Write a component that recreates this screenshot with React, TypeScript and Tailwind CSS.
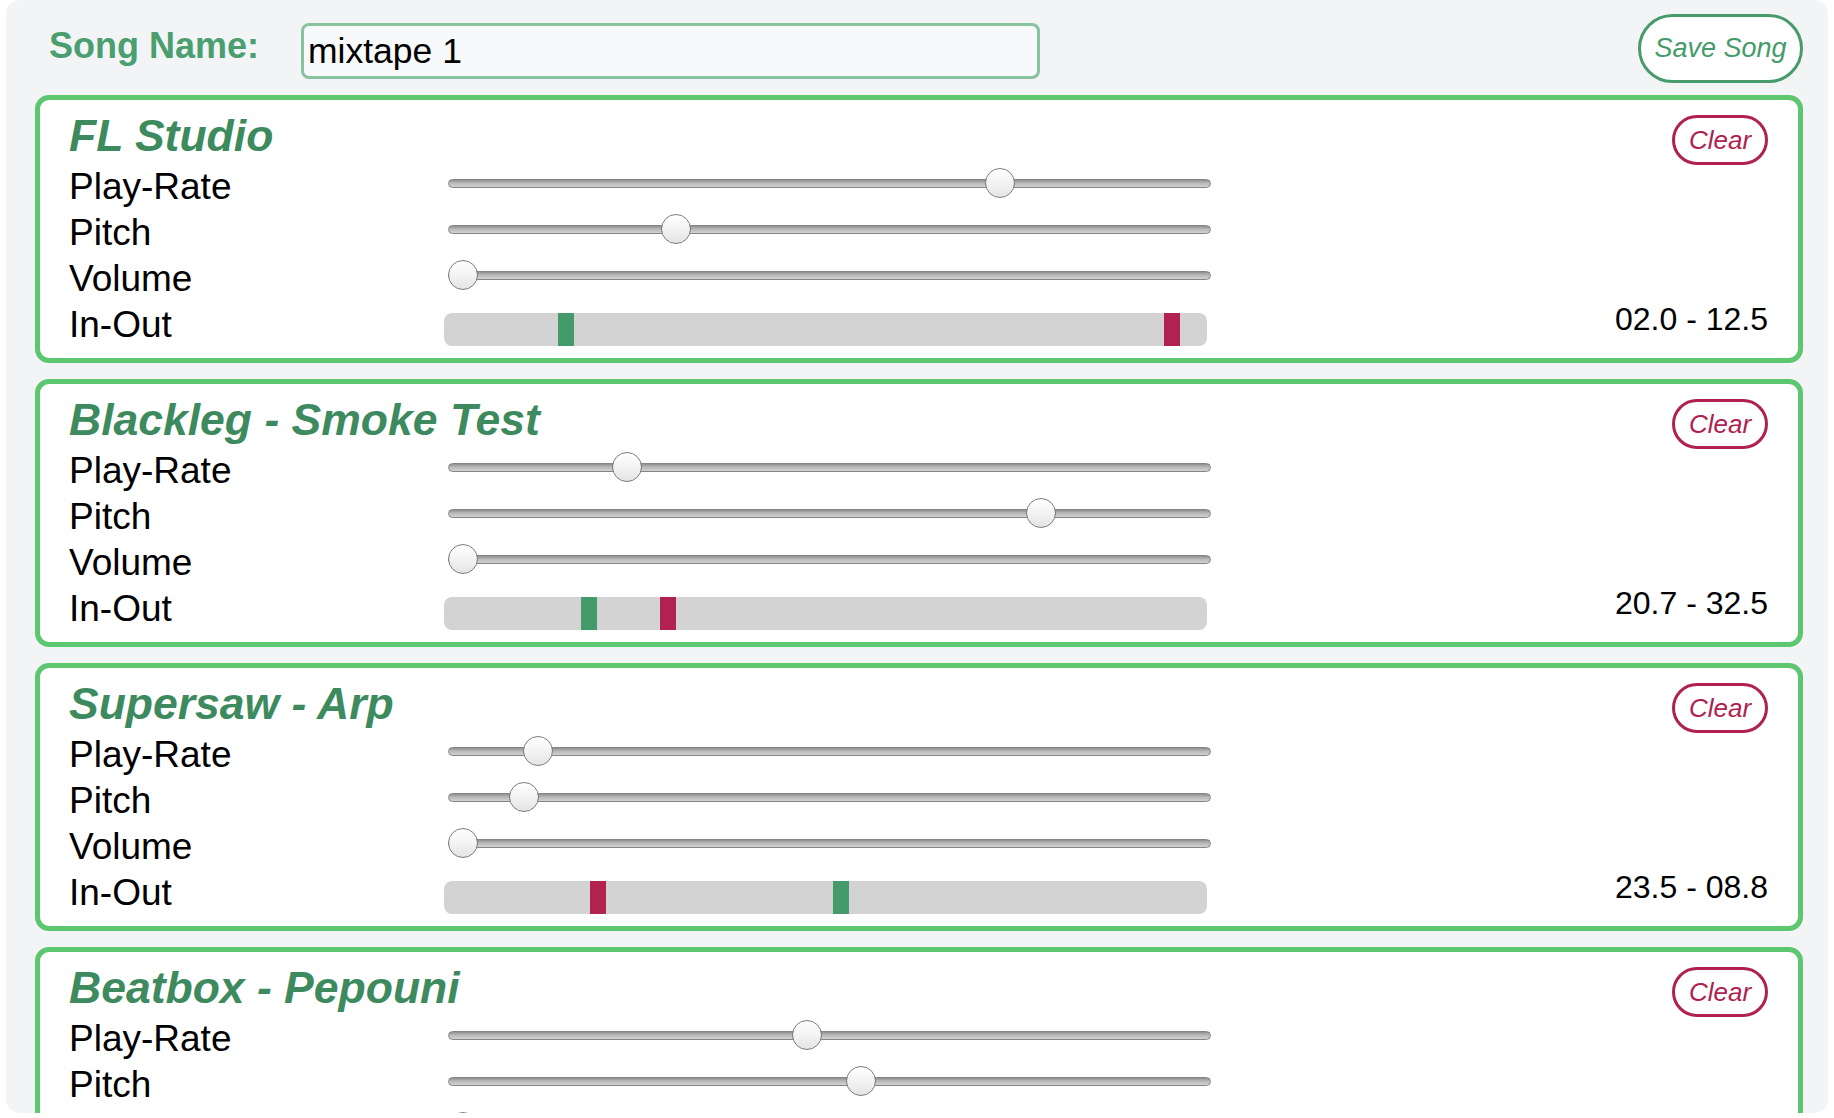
import React from "react";

interface Track {
  title: string;
  rate: number;
  pitch: number;
  volume: number;
  inPos: number;
  outPos: number;
  range: string;
}

const tracks: Track[] = [
  { title: "FL Studio", rate: 0.732, pitch: 0.291, volume: 0, inPos: 0.149, outPos: 0.944, range: "02.0 - 12.5" },
  { title: "Blackleg - Smoke Test", rate: 0.224, pitch: 0.789, volume: 0, inPos: 0.18, outPos: 0.283, range: "20.7 - 32.5" },
  { title: "Supersaw - Arp", rate: 0.102, pitch: 0.083, volume: 0, inPos: 0.51, outPos: 0.191, range: "23.5 - 08.8" },
  { title: "Beatbox - Pepouni", rate: 0.469, pitch: 0.543, volume: 0, inPos: 0.2, outPos: 0.6, range: "00.0 - 00.0" },
];

const Slider = ({ value }: { value: number }) => (
  <div className="relative ml-[4px] flex h-[46px] w-[763px] items-center pb-[4px]">
    <div className="h-[9px] w-full rounded-full border border-[#858585] bg-[linear-gradient(to_bottom,#8f8f8f,#b9b9b9_45%,#d2d2d2)]" />
    <div
      className="absolute top-[6px] h-[30px] w-[30px] rounded-full border-[1.5px] border-[#7c7c7c] bg-[linear-gradient(to_bottom,#ffffff,#f3f3f3_50%,#e4e4e4)]"
      style={{ left: value * (763 - 30) + "px" }}
    />
  </div>
);

const InOut = ({ inPos, outPos }: { inPos: number; outPos: number }) => (
  <div className="flex h-[46px] items-start pt-[13px]">
    <div className="relative h-[33px] w-[763px] overflow-hidden rounded-[8px] bg-[#d3d3d3]">
      <div className="absolute top-0 h-full w-[16px] bg-[#449a6a]" style={{ left: inPos * 763 + "px" }} />
      <div className="absolute top-0 h-full w-[16px] bg-[#b22250]" style={{ left: outPos * 763 + "px" }} />
    </div>
  </div>
);

const Row = ({ label, children }: { label: string; children: React.ReactNode }) => (
  <div className="grid grid-cols-[375px_767px]">
    <div className="h-[46px] text-[37px] leading-[50px] text-black">{label}</div>
    {children}
  </div>
);

const TrackCard = ({ track }: { track: Track }) => (
  <div className="flex shrink-0 rounded-[14px] border-[5px] border-[#5cc76f] bg-white pb-[12px] pl-[29px] pr-[30px] pt-[9px]">
    <div className="flex-1">
      <h2 className="h-[53px] text-[44.5px] font-bold italic leading-[53px] text-[#3d8a5e]">{track.title}</h2>
      <Row label="Play-Rate">
        <Slider value={track.rate} />
      </Row>
      <Row label="Pitch">
        <Slider value={track.pitch} />
      </Row>
      <Row label="Volume">
        <Slider value={track.volume} />
      </Row>
      <Row label="In-Out">
        <InOut inPos={track.inPos} outPos={track.outPos} />
      </Row>
    </div>
    <div className="flex flex-col items-end justify-between">
      <button className="mt-[6px] h-[50px] w-[96px] rounded-full border-[3px] border-[#b0214f] bg-white text-[26px] italic text-[#b0214f]">
        Clear
      </button>
      <div className="mb-[7px] text-[32px] leading-[40px] text-black">{track.range}</div>
    </div>
  </div>
);

export default function App() {
  return (
    <div className="min-h-screen bg-white font-['Liberation_Sans',Arial,sans-serif]">
      <div className="ml-[6px] flex h-[1113px] w-[1822px] flex-col overflow-hidden rounded-[14px] bg-[#f3f4f6] pl-[29px] pr-[25px] pt-[14px]">
        <div className="mb-[12px] flex h-[69px] shrink-0 items-start">
          <label className="ml-[14px] mt-[12px] w-[252px] text-[36px] font-bold leading-[40px] text-[#4a9e6f]">
            Song Name:
          </label>
          <input
            className="mt-[9px] h-[56px] w-[739px] rounded-[8px] border-[3px] border-[#88c29f] bg-[#f8f9fa] px-[4px] text-[35.5px] text-black outline-none"
            defaultValue="mixtape 1"
          />
          <button className="ml-auto h-[69px] w-[165px] rounded-full border-[3px] border-[#479b6b] bg-white text-[27px] italic text-[#479b6b]">
            Save Song
          </button>
        </div>
        <div className="flex flex-col gap-[16px]">
          {tracks.map((t, i) => (
            <TrackCard key={i} track={t} />
          ))}
        </div>
      </div>
    </div>
  );
}
